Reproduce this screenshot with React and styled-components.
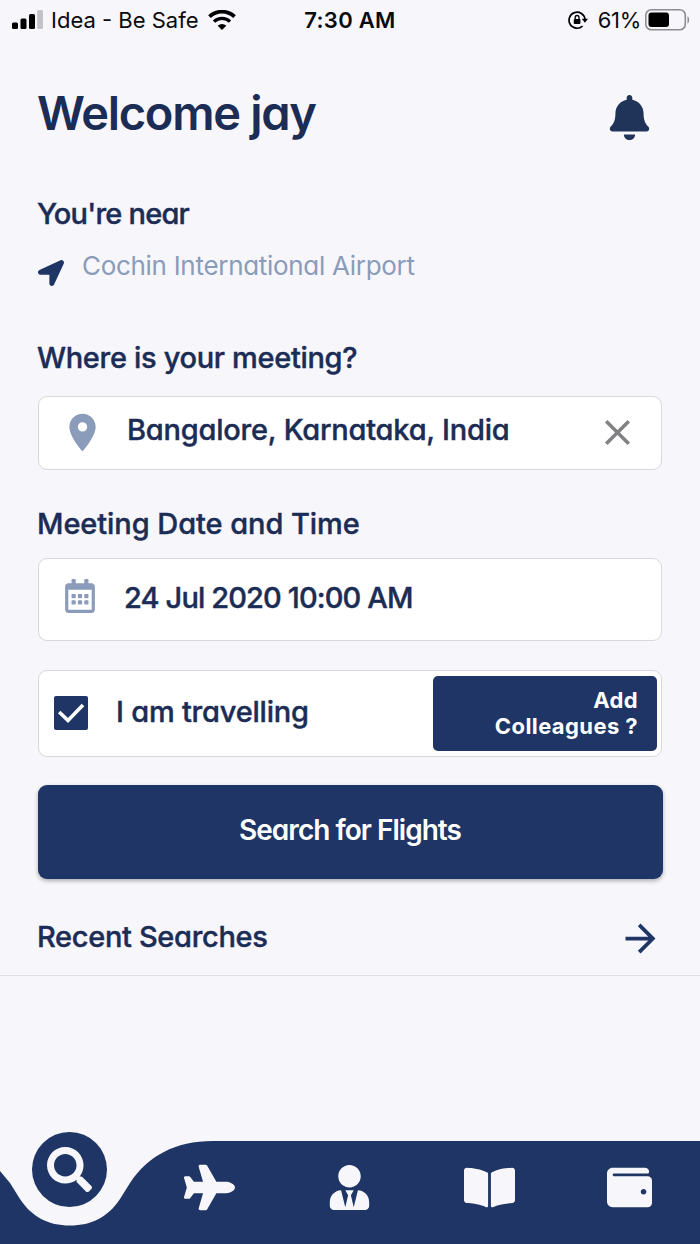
import styled, { createGlobalStyle } from 'styled-components'
import {
  FaBell,
  FaBookOpen,
  FaLocationArrow,
  FaPlane,
  FaRegCalendarAlt,
  FaSearch,
  FaUserTie,
  FaWallet
} from 'react-icons/fa'
import { MdArrowForward, MdClose, MdLocationOn } from 'react-icons/md'

const navy = '#1e3565'
const ink = '#1b2c55'
const muted = '#8a9cb9'
const paper = '#f7f6fb'

const GlobalStyle = createGlobalStyle`
  * {
    box-sizing: border-box;
  }
  body {
    margin: 0;
    background: ${paper};
    font-family: Inter, 'Liberation Sans', sans-serif;
  }
  button {
    border: 0;
    padding: 0;
    background: none;
    font-family: inherit;
  }
  svg {
    display: block;
    flex: none;
  }
`

const Screen = styled.div`
  width: 700px;
  height: 1244px;
  display: flex;
  flex-direction: column;
  overflow: hidden;
  color: ${ink};
`

const StatusBar = styled.div`
  height: 39px;
  padding: 0 10px 0 12px;
  display: grid;
  grid-template-columns: 1fr auto 1fr;
  align-items: center;
  color: #0b0b0d;
  font-size: 22px;
  white-space: nowrap;
`

const StatusGroup = styled.div`
  display: flex;
  align-items: center;
  gap: ${props => props.gap}px;
  justify-content: ${props => (props.end ? 'flex-end' : 'flex-start')};
`

const Clock = styled.span`
  margin-right: 2px;
  font-weight: 600;
  letter-spacing: 0.3px;
`

const Carrier = styled.span`
  margin-right: 2px;
`

const Percent = styled.span`
  margin-left: 6px;
  letter-spacing: -0.3px;
`

const Content = styled.main`
  flex: 1;
  padding: 44px 38px 0;
  font-feature-settings: 'cv11';
`

const Header = styled.header`
  display: flex;
  justify-content: space-between;
  padding-right: 10px;
  svg {
    margin-top: 12px;
  }
`

const Title = styled.h1`
  margin: 0 0 0 -1px;
  font-size: 47px;
  line-height: 60px;
  font-weight: 600;
  letter-spacing: ${props => props.track}px;
`

const Label = styled.h2`
  margin: ${props => props.top}px 0 ${props => props.bottom || 0}px -1px;
  font-size: 29px;
  line-height: 40px;
  font-weight: 500;
  letter-spacing: ${props => props.track || 0}px;
  -webkit-text-stroke: 0.4px currentColor;
`

const Near = styled.div`
  display: flex;
  gap: 18px;
  margin-top: 15px;
  height: 34px;
  color: ${navy};
  svg {
    margin-top: 11px;
  }
`

const NearText = styled.span`
  color: ${muted};
  font-size: 26px;
  line-height: 34px;
  letter-spacing: -0.3px;
`

const Field = styled.div`
  height: ${props => props.height}px;
  display: flex;
  align-items: center;
  background: #fff;
  border: 1px solid #d8d8db;
  border-radius: 9px;
  color: ${muted};
  padding: ${props => props.pad};
  margin-top: ${props => props.top || 0}px;
`

const CalendarIcon = styled(FaRegCalendarAlt)`
  margin-bottom: 8px;
`

const Value = styled.span`
  flex: 1;
  color: ${ink};
  font-size: 29px;
  line-height: 40px;
  font-weight: 500;
  white-space: nowrap;
  letter-spacing: ${props => props.track}px;
  margin-left: ${props => props.left}px;
  padding-bottom: ${props => props.lift}px;
  -webkit-text-stroke: 0.4px currentColor;
`

const CheckBox = styled.span`
  width: 34px;
  height: 34px;
  border-radius: 2px;
  background: ${navy};
`

const AddButton = styled.button`
  width: 224px;
  height: 75px;
  margin-top: 2px;
  padding: 0 19px 1px 0;
  border-radius: 5px;
  background: ${navy};
  color: #fff;
  font-size: 22px;
  line-height: 26px;
  font-weight: 700;
  letter-spacing: 0.4px;
  text-align: right;
`

const SearchButton = styled.button`
  width: 625px;
  height: 94px;
  margin: 28px 0 0 -0.5px;
  padding-bottom: 5px;
  display: block;
  border-radius: 9px;
  background: ${navy};
  box-shadow: 0 2px 4px rgba(0, 0, 0, 0.3);
  color: #fff;
  font-size: 28px;
  font-weight: 600;
  letter-spacing: -0.98px;
  font-feature-settings: inherit;
`

const Recent = styled.div`
  display: flex;
  align-items: center;
  justify-content: space-between;
  margin: 37px -38px 0;
  padding: 0 37px 14px 38px;
  border-bottom: 1px solid #dfdfe5;
`

const Nav = styled.nav`
  position: relative;
  height: 112px;
  display: grid;
  grid-template-columns: repeat(5, 1fr);
  justify-items: center;
  align-items: center;
  color: ${paper};
`

const NavShape = styled.svg`
  position: absolute;
  left: 0;
  top: 0;
`

const NavItem = styled.button`
  position: relative;
  margin: 0 1px 1px 0;
  color: inherit;
`

const ActiveItem = styled(NavItem)`
  align-self: start;
  width: 75px;
  height: 75px;
  display: flex;
  align-items: center;
  justify-content: center;
  border-radius: 50%;
  background: ${navy};
`

const Signal = () => (
  <svg width="31" height="20" viewBox="0 0 31 20">
    <rect x="0" y="12.5" width="6" height="6.5" rx="1.5" fill="#000" />
    <rect x="8.5" y="8.5" width="6" height="10.5" rx="1.5" fill="#000" />
    <rect x="17" y="4" width="6" height="15" rx="1.5" fill="#000" />
    <rect x="25.2" y="0" width="5.8" height="19" rx="1.5" fill="#c3c2c8" />
  </svg>
)

const Wifi = () => (
  <svg width="28" height="20" viewBox="0 0 28 20" fill="none" stroke="#000">
    <path d="M1.5 6.7a18 18 0 0 1 25 0" strokeWidth="3.8" />
    <path d="M6 11.6a11.5 11.5 0 0 1 16 0" strokeWidth="3.3" />
    <path d="M14 20l-4.3-4.3a6 6 0 0 1 8.6 0z" fill="#000" stroke="none" />
  </svg>
)

const RotationLock = () => (
  <svg width="20" height="20" viewBox="0 0 20 20" fill="none" stroke="#000">
    <path d="M14.6 16a8 8 0 1 1 2.4-6.5" strokeWidth="1.7" />
    <path d="M13.8 8.8h6.2l-3.1 4z" fill="#000" stroke="none" />
    <rect x="5.8" y="9" width="6.6" height="5" rx="0.8" fill="#000" stroke="none" />
    <path d="M7.2 9V7.4a1.9 1.9 0 0 1 3.8 0V9" strokeWidth="1.3" />
  </svg>
)

const Battery = () => (
  <svg width="45" height="22" viewBox="0 0 45 22">
    <rect x="0.8" y="0.8" width="39.5" height="20" rx="5.5" fill="none" stroke="#8e8d92" strokeWidth="1.6" />
    <rect x="3.5" y="3.6" width="20.5" height="14.4" rx="3" fill="#000" />
    <path d="M42.5 7.2c2.2 1 2.2 6.2 0 7.2z" fill="#8e8d92" />
  </svg>
)

const tabs = [
  { name: 'flights', Icon: FaPlane, size: 51 },
  { name: 'profile', Icon: FaUserTie, size: 45 },
  { name: 'bookings', Icon: FaBookOpen, size: 51 },
  { name: 'wallet', Icon: FaWallet, size: 45 }
]

const App = () => (
  <Screen>
    <GlobalStyle />
    <StatusBar>
      <StatusGroup gap={8}>
        <Signal />
        <Carrier>Idea - Be Safe</Carrier>
        <Wifi />
      </StatusGroup>
      <Clock>7:30 AM</Clock>
      <StatusGroup end gap={4}>
        <RotationLock />
        <Percent>61%</Percent>
        <Battery />
      </StatusGroup>
    </StatusBar>

    <Content>
      <Header>
        <Title track={-1.3}>Welcome jay</Title>
        <FaBell size={45} color="#203359" />
      </Header>

      <Label top={51} track={-0.8}>You're near</Label>
      <Near>
        <FaLocationArrow size={26} />
        <NearText>Cochin International Airport</NearText>
      </Near>

      <Label top={55} bottom={18} track={-0.33}>Where is your meeting?</Label>
      <Field height={74} pad="0 22px 2px 21px">
        <MdLocationOn size={45} />
        <Value left={22} lift={5} track={-0.22}>Bangalore, Karnataka, India</Value>
        <MdClose size={43} color="#828284" />
      </Field>

      <Label top={34} bottom={14} track={-0.07}>Meeting Date and Time</Label>
      <Field height={83} pad="0 21px 0 24px">
        <CalendarIcon size={34} />
        <Value left={27} lift={4} track={-0.87}>24 Jul 2020 10:00 AM</Value>
      </Field>

      <Field height={87} top={29} pad="0 4px 2px 15px">
        <CheckBox>
          <svg width="34" height="34" viewBox="0 0 34 34" fill="none" stroke="#fff" strokeWidth="3.6">
            <path d="M5.2 16l8.8 8.5 15-15.5" />
          </svg>
        </CheckBox>
        <Value left={28} lift={2} track={-0.22}>I am travelling</Value>
        <AddButton>
          Add
          <br />
          Colleagues ?
        </AddButton>
      </Field>

      <SearchButton>Search for Flights</SearchButton>

      <Recent>
        <Label top={0} bottom={4} track={-0.33}>Recent Searches</Label>
        <MdArrowForward size={45} color={navy} />
      </Recent>
    </Content>

    <Nav>
      <NavShape width="700" height="112" viewBox="0 0 700 112">
        <path
          d="M0 39L10 51L20 67C32 85 48 93.5 70 93.5C92 93.5 108 85 120 67L130 51C148 24 175 9 213 9H700V112H0Z"
          fill={navy}
        />
      </NavShape>
      <ActiveItem aria-label="search">
        <FaSearch size={45} />
      </ActiveItem>
      {tabs.map(({ name, Icon, size }) => (
        <NavItem key={name} aria-label={name}>
          <Icon size={size} />
        </NavItem>
      ))}
    </Nav>
  </Screen>
)

export default App
